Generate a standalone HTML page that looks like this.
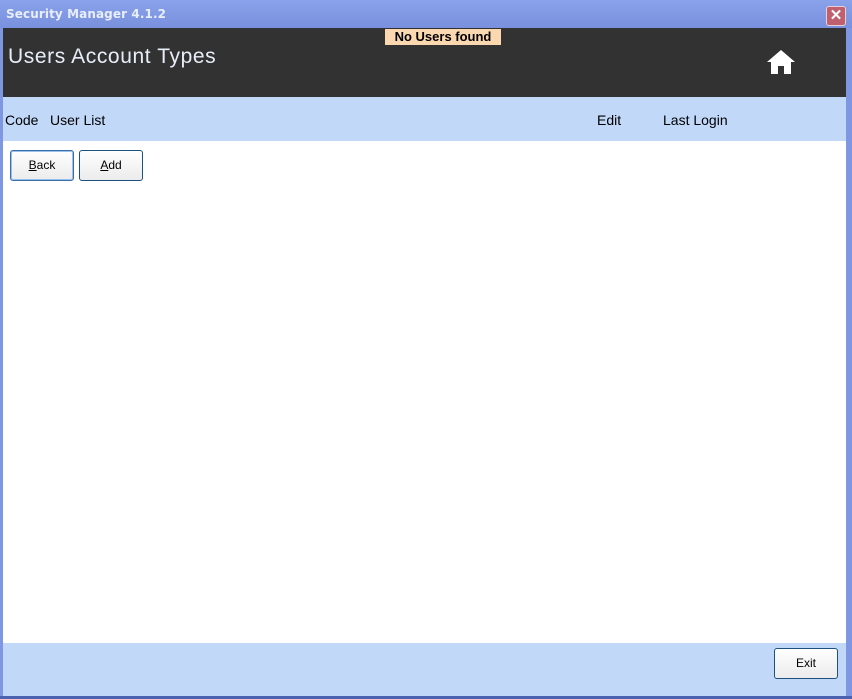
<!DOCTYPE html>
<html><head><style>
body{margin:0;width:852px;height:699px;position:relative;overflow:hidden;background:#7f97e3;font-family:"Liberation Sans",sans-serif}
div{position:absolute;box-sizing:border-box}
.btn{background:linear-gradient(#fefefe,#ececec);border:1px solid #1c5180;border-radius:3px;font-size:12px;text-align:center;line-height:28px;color:#000}
</style></head><body>
<div style="left:0;top:0;width:852px;height:28px;background:linear-gradient(#8aa2ea,#7990de)"></div>
<div style="left:6px;top:7px;font-family:'DejaVu Sans',sans-serif;font-size:12px;font-weight:bold;color:#e8eefc;letter-spacing:0.1px">Security Manager 4.1.2</div>
<div style="left:826px;top:6px;width:20px;height:20px;background:#c0606e;border:1px solid #e8d0d8;border-radius:3px;color:#fff;font-size:15px;text-align:center;line-height:18px;font-weight:bold">✕</div>
<div style="left:3px;top:28px;width:843px;height:69px;background:#323232"></div>
<div style="left:385px;top:29px;width:116px;height:16px;background:#fcd8b0;font-size:13px;font-weight:bold;text-align:center;line-height:16px">No Users found</div>
<div style="left:8px;top:45px;font-size:21px;letter-spacing:0.6px;color:#e8eef8">Users Account Types</div>
<svg style="position:absolute;left:766px;top:49px" width="30" height="26" viewBox="0 0 30 26"><path d="M15 1 L1 13 H5 V25 H12 V17 H18 V25 H25 V13 H29 Z" fill="#fff"/></svg>
<div style="left:3px;top:97px;width:843px;height:44px;background:#c1d8f9"></div>
<div style="left:5px;top:112px;font-size:14px">Code</div>
<div style="left:50px;top:112px;font-size:14px">User List</div>
<div style="left:597px;top:112px;font-size:14px">Edit</div>
<div style="left:663px;top:112px;font-size:14px">Last Login</div>
<div style="left:3px;top:141px;width:843px;height:502px;background:#fff"></div>
<div class="btn" style="left:10px;top:150px;width:64px;height:31px;border-color:#3a6ea8;box-shadow:inset 0 0 0 1px #9cc0ec"><u>B</u>ack</div>
<div class="btn" style="left:79px;top:150px;width:64px;height:31px"><u>A</u>dd</div>
<div style="left:3px;top:643px;width:843px;height:53px;background:#c1d8f9"></div>
<div class="btn" style="left:774px;top:648px;width:64px;height:31px">Exit</div>
<div style="left:0;top:696px;width:852px;height:3px;background:#4a62b0"></div>
</body></html>
